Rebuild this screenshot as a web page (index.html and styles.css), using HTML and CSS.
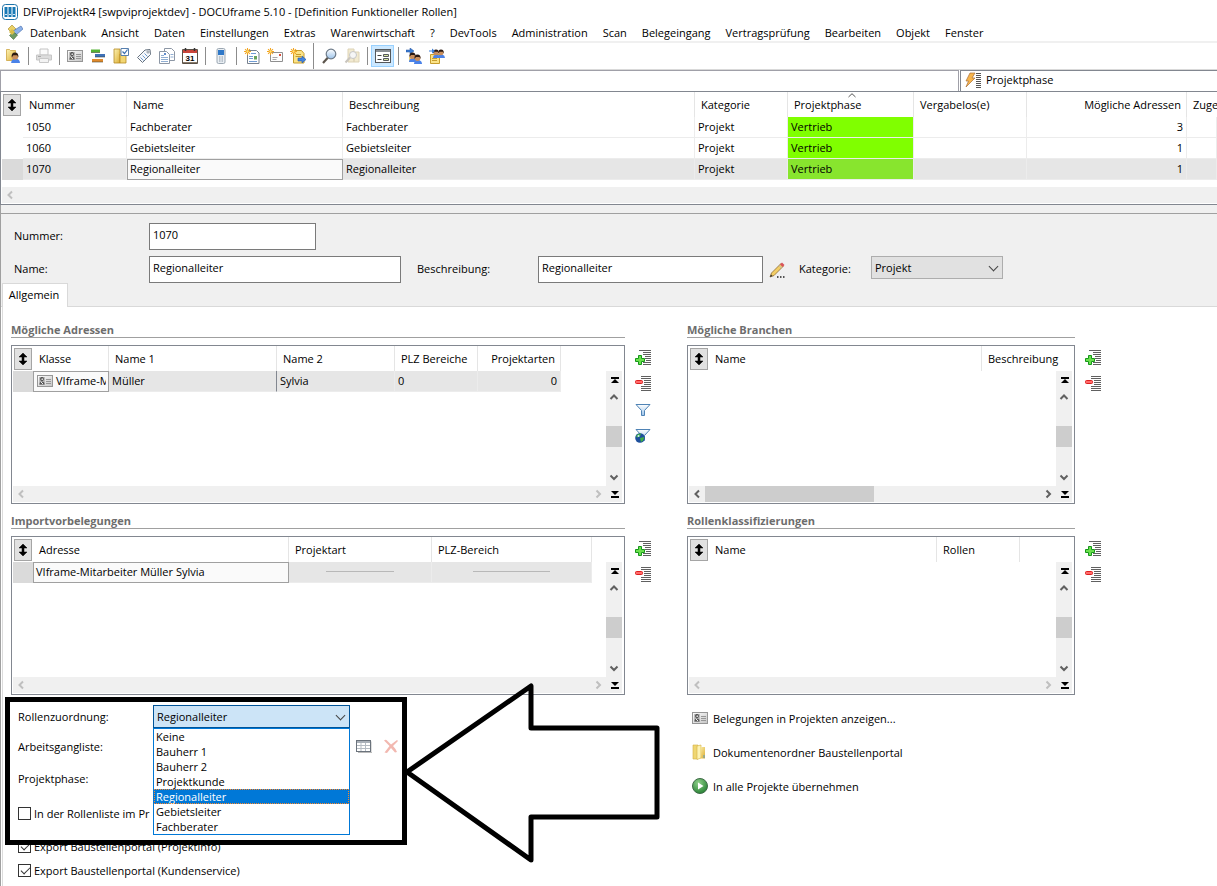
FILE: index.html
```html
<!DOCTYPE html>
<html lang="de">
<head>
  <meta charset="UTF-8">
  <meta name="viewport" content="width=device-width, initial-scale=1.0">
  <title>DFViProjektR4 - DOCUframe 5.10</title>
  <link rel="stylesheet" href="styles.css">
</head>
<body>

<!-- icon sprite -->
<svg class="sprite" width="0" height="0" aria-hidden="true">
  <defs>
    <linearGradient id="gold" x1="0" y1="0" x2="1" y2="1"><stop offset="0" stop-color="#fdf3b4"/><stop offset="1" stop-color="#dcae35"/></linearGradient>
    <linearGradient id="glass" x1="0" y1="0" x2="0" y2="1"><stop offset="0" stop-color="#fff"/><stop offset="1" stop-color="#9cc3ea"/></linearGradient>
    <radialGradient id="green" cx=".4" cy=".3" r=".8"><stop offset="0" stop-color="#8fd08a"/><stop offset="1" stop-color="#1c7a2a"/></radialGradient>
    <linearGradient id="steel" x1="0" y1="0" x2="1" y2="1"><stop offset="0" stop-color="#fff"/><stop offset="1" stop-color="#c4c4c4"/></linearGradient>
  </defs>
  <symbol id="app" viewBox="0 0 16 16"><rect x=".5" y=".5" width="15" height="15" rx="3" fill="#fff" stroke="#1d73a8"/><path d="M2.500 3h3v10h-3zM6.500 3h3v10h-3zM10.500 3h3v10h-3z" fill="#1879b5"/><path d="M3 10.500h2M7 10.500h2M11 10.500h2" stroke="#cfe6f5"/></symbol>
  <symbol id="cubes" viewBox="0 0 16 16"><path d="M5 1l4 4-4 4-4-4z" fill="#ead166" stroke="#a58725" stroke-width=".6"/><path d="M14 2l2 3-7 6-3-4z" fill="#8cb2ea" stroke="#4268a8" stroke-width=".6"/><path d="M6.500 8l4 3-4 4.500-4-4z" fill="#6f9a62" stroke="#3f6a3a" stroke-width=".6"/><path d="M5 5l3 3-3 3-3-3z" fill="#d9bd48"/></symbol>
  <symbol id="head" viewBox="0 0 9 10"><path d="M1 10q0-3 3-4h2q3 1 3 4z" fill="#4a82e8"/><circle cx="4.500" cy="4" r="2.900" fill="#c98e5c"/><path d="M1.500 5q-.5-4.500 3-4.500t3 4.500l-1-2H3z" fill="#2b1a12"/></symbol>
  <symbol id="user" viewBox="0 0 16 16"><path d="M1.500 1.500h3l1 1h5v10h-9z" fill="url(#gold)" stroke="#c79b2f" stroke-width=".7"/><use href="#head" x="5" y="4" width="10" height="11"/></symbol>
  <symbol id="printer" viewBox="0 0 16 16"><path d="M4 1h8v6H4z" fill="#fafafa" stroke="#c4c4c4"/><path d="M.5 7h15v5H.5z" fill="#dcdcdc" stroke="#c6c6c6"/><path d="M3.500 10.500h9v4h-9z" fill="#f3f3f3" stroke="#c8c8c8"/><path d="M2 8.500h3" stroke="#aaa"/></symbol>
  <symbol id="card" viewBox="0 0 16 16"><rect x=".5" y="2.500" width="15" height="11" fill="url(#steel)" stroke="#969696"/><path d="M2 4h6v8H2z" fill="#bdbdbd"/><circle cx="5" cy="6" r="1.900" fill="#444"/><circle cx="5.200" cy="6.200" r=".9" fill="#ddd"/><path d="M2.500 11.500q0-3 2.500-3t2.500 3z" fill="#555"/><path d="M4 9l2 2" stroke="#eee"/><path d="M9 6.500h5M9 8.500h5M9 10.500h5" stroke="#969696"/></symbol>
  <symbol id="gantt" viewBox="0 0 16 16"><path d="M1 1.500h9v3H1z" fill="#54b234"/><path d="M5 6h10v3H5z" fill="#3e71b8"/><path d="M2 11h11v3H2z" fill="#e08a2c"/><path d="M1 4.500h9M5 9h10M2 14h11" stroke="#3a4030" stroke-opacity=".55"/></symbol>
  <symbol id="folderdoc" viewBox="0 0 16 16"><path d="M1 1h6v14H1z" fill="url(#gold)" stroke="#b58a23" stroke-width=".8"/><path d="M7 6h6v9H7z" fill="#f2d673" stroke="#b58a23" stroke-width=".8"/><path d="M8 .5h7.500v7H8z" fill="#fff" stroke="#577fae"/><path d="M9.500 3.500l2 2 3-4" fill="none" stroke="#3b6fb0" stroke-width="1.200"/></symbol>
  <symbol id="tag" viewBox="0 0 16 16"><path d="M9 2l5-.5.5 5-8 8L1.500 9.500z" fill="#f6f8fb" stroke="#687481"/><circle cx="12" cy="4" r="1.100" fill="#fff" stroke="#687481" stroke-width=".7"/><path d="M8.500 5.500l3 3M6.500 7.500l3 3M4.500 9.500l3 3" stroke="#6c9bd0"/></symbol>
  <symbol id="docs" viewBox="0 0 16 16"><path d="M5.500.5h7l3 3v9h-10z" fill="#fff" stroke="#8d97a5"/><path d="M.5 3.500h7l3 3v9H.5z" fill="#fff" stroke="#8d97a5"/><path d="M2 7.500h3M2 9.500h7M2 11.500h7M2 13.500h7M11.500 6.500h3M11.500 9h3" stroke="#90aed2"/><path d="M5 6h2" stroke="#2d66bb" stroke-width="1.500"/></symbol>
  <symbol id="phone" viewBox="0 0 16 16"><rect x="4" y=".5" width="8" height="15" rx="1.500" fill="#e9eef3" stroke="#9ba7b2"/><path d="M5 2h6v5H5z" fill="#2f78c8"/><path d="M6 9h4M6 11h4M6 13h4" stroke="#8e9ba7" stroke-dasharray="1 .5"/></symbol>
  <symbol id="star" viewBox="0 0 8 8"><path d="M4 0v8M0 4h8M1.200 1.200l5.600 5.600M6.800 1.200L1.200 6.800" stroke="#f2a623" stroke-width="1.200"/><circle cx="4" cy="4" r="1.300" fill="#ffe178"/></symbol>
  <symbol id="newdoc" viewBox="0 0 16 16"><path d="M3.500 2.500h9l2.500 2.500v10.500H3.500z" fill="#fff" stroke="#77818e"/><path d="M7 5.500h5M5 8.500h4M5 10.500h4M5 13.500h8" stroke="#6f9bd2"/><path d="M10 8h3v3.500h-3z" fill="#69a35b"/><use href="#star" width="7" height="7"/></symbol>
  <symbol id="newmail" viewBox="0 0 16 16"><path d="M3.500 4.500h12v9h-12z" fill="#fdfdfd" stroke="#8f8f8f"/><path d="M12 6h2v2h-2z" fill="#d84d3a"/><path d="M5.500 9.500h5M5.500 11.500h4" stroke="#a9a9a9"/><use href="#star" width="7" height="7"/></symbol>
  <symbol id="newnote" viewBox="0 0 16 16"><path d="M3.500 2.500h8l2.500 3v9.500H3.500z" fill="#fbe387" stroke="#c79d2c"/><path d="M6 6.500h5M5.500 8.500h6" stroke="#c79d2c"/><path d="M8 10h4V8l4 3.500-4 3.500v-2H8z" fill="#4285e0" stroke="#2356a6" stroke-width=".6"/><use href="#star" width="7" height="7"/></symbol>
  <symbol id="search" viewBox="0 0 16 16"><path d="M7 9.500L2 15" stroke="#5c554c" stroke-width="2.200"/><circle cx="10" cy="6" r="4.800" fill="url(#glass)" stroke="#6d7a88" stroke-width="1.200"/></symbol>
  <symbol id="searchoff" viewBox="0 0 16 16"><path d="M4 1h6v13H4zM10 4h5v10h-5z" fill="#f2ead0" stroke="#ddd3b6"/><path d="M6 9.500L1.500 14.500" stroke="#c9c5be" stroke-width="2"/><circle cx="9" cy="7" r="3.500" fill="#f6f6f6" stroke="#c6c6c6"/></symbol>
  <symbol id="form" viewBox="0 0 16 16"><rect x=".5" y="1.500" width="15" height="13" fill="#fff" stroke="#54585c"/><path d="M1 2h14v2H1z" fill="#8b9095"/><path d="M2.500 7.500h4M2.500 11.500h4" stroke="#444"/><path d="M8.500 6.500h5v2h-5zM8.500 10.500h5v2h-5z" fill="#d8e6a0" stroke="#54585c"/></symbol>
  <symbol id="tousers" viewBox="0 0 16 16"><path d="M0 2h4V0l4 3-4 3V4H0z" fill="#3d7fd6" stroke="#1f4f9a" stroke-width=".5"/><path d="M3 9h6v5H3z" fill="#f2d673"/><use href="#head" x="2" y="4" width="9" height="10"/><use href="#head" x="7" y="6" width="9" height="10"/></symbol>
  <symbol id="notusers" viewBox="0 0 16 16"><path d="M1.500 6.500h9v9h-9z" fill="#fbe387" stroke="#c79d2c"/><path d="M3 10.500h5M3 12.500h5" stroke="#c79d2c"/><use href="#head" x="3" y="1" width="8" height="9"/><use href="#head" x="8" y="1" width="8" height="9"/><path d="M0 2.500h3V.5L6 3 3 5.500v-2H0z" fill="#3d7fd6"/></symbol>
  <symbol id="bolt" viewBox="0 0 17 16"><path d="M5 1h5L7 6h3L1 15l2.500-6H1z" fill="#f7b54c" stroke="#a9703a" stroke-width=".7"/><path d="M11 1.500h5M11 3.500h5M11 5.500h5M11 7.500h5M11 9.500h5M11 11.500h5M11 13.500h5M11 15.500h5" stroke="#555"/></symbol>
  <symbol id="updown" viewBox="0 0 10 14"><path d="M5 1l4 4H6v4h3l-4 4-4-4h3V5H1z" fill="#000" stroke="#000" stroke-width=".5"/></symbol>
  <symbol id="pencil" viewBox="0 0 16 16"><path d="M1 15l1.500-4L12 1.500l2.500 2.500L5 13.500z" fill="#f3ce65" stroke="#8e6b30" stroke-width=".8"/><path d="M11 2.500L13 .5l2.500 2.500-2 2z" fill="#d9545c"/><path d="M10 3.500l2.500 2.500" stroke="#b8bcc2"/><path d="M1 15l1-2.500 1.500 1.500z" fill="#333"/><path d="M8 15h2M11 15h2M14 15h2" stroke="#222" stroke-width="1.500" stroke-dasharray="1.500 1.500"/></symbol>
  <symbol id="add" viewBox="0 0 16 16"><path d="M4 .5h12M8 2.500h8M8 4.500h8M10 6.500h6M10 8.500h6M11 10.500h5M8 12.500h8M8 14.500h8" stroke="#606060"/><path d="M3.500 5.500h3v3h3v3h-3v3h-3v-3h-3v-3h3z" fill="#6ae04c" stroke="#16971a"/></symbol>
  <symbol id="remove" viewBox="0 0 16 16"><path d="M6 .5h10M6 2.500h10M9 4.500h7M9 6.500h7M9 8.500h7M6 10.500h10M6 12.500h10M6 14.500h10" stroke="#606060"/><rect x=".5" y="4.500" width="7" height="3" rx="1" fill="#ff6a6a" stroke="#dd2020"/></symbol>
  <symbol id="funnel" viewBox="0 0 16 16"><path d="M1 2.500h14L9.500 8.500v5h-3v-5z" fill="url(#glass)" stroke="#4f83b5"/></symbol>
  <symbol id="funnelglobe" viewBox="0 0 16 16"><path d="M1 1.500h14L9.500 7.500v5h-3v-5z" fill="url(#glass)" stroke="#4f83b5"/><circle cx="5" cy="10" r="4.800" fill="#1d4f9c"/><path d="M1 8q2-3 5-2.500l-1 3-3 1zM5 10l4-1q0 4-3 5z" fill="#3fae46"/><circle cx="3.500" cy="8" r="1" fill="#cfe8ff"/></symbol>
  <symbol id="up" viewBox="0 0 16 16"><path d="M4.500 10L8 6.500l3.500 3.500" fill="none" stroke="currentColor" stroke-width="2"/></symbol>
  <symbol id="down" viewBox="0 0 16 16"><path d="M4.500 6.500L8 10l3.500-3.500" fill="none" stroke="currentColor" stroke-width="2"/></symbol>
  <symbol id="left" viewBox="0 0 16 16"><path d="M10 4.500L6.500 8l3.500 3.500" fill="none" stroke="currentColor" stroke-width="2"/></symbol>
  <symbol id="right" viewBox="0 0 16 16"><path d="M6.500 4.500L10 8l-3.500 3.500" fill="none" stroke="currentColor" stroke-width="2"/></symbol>
  <symbol id="first" viewBox="0 0 16 16"><path d="M5 5h8v2H5zM9 7l4 4H5z" fill="#000"/></symbol>
  <symbol id="last" viewBox="0 0 16 16"><path d="M5 10h8v2H5zM9 9l4-4H5z" fill="#000"/></symbol>
  <symbol id="grid" viewBox="0 0 16 16"><path d="M2 14.500h14v-11" fill="none" stroke="#bbb"/><rect x=".5" y="2.500" width="14" height="11" fill="#fff" stroke="#6b737c"/><path d="M1 3h13v2H1z" fill="#a9b0b8"/><path d="M1 7.500h13M1 10.500h13M5 5v8M9.500 5v8" stroke="#b5bcc3"/></symbol>
  <symbol id="cross" viewBox="0 0 16 16"><path d="M1 2.500q2-1.500 3 0l4 4 6-4.500 1 1-5 5q3 3 4 6l-2 .5-4-4.500-4 5-2.500-.5 5-6.500z" fill="#f2b8b0"/></symbol>
  <symbol id="folder" viewBox="0 0 16 16"><path d="M1 1h5v14H1z" fill="#efd672" stroke="#d3b040" stroke-width=".6"/><path d="M5 2l4-1v13l-4 1.500z" fill="#fdf3b4" stroke="#d3b040" stroke-width=".6"/><path d="M9 3h4v11.500H7L9 14z" fill="url(#gold)"/><path d="M12 11v3" stroke="#5a9bc0"/></symbol>
  <symbol id="play" viewBox="0 0 16 16"><circle cx="8" cy="8" r="7.500" fill="url(#green)" stroke="#3f6b48"/><path d="M6 4.500L11.500 8 6 11.500z" fill="#fff"/></symbol>
</svg>

<header class="titlebar">
  <svg class="icon"><use href="#app"/></svg>
  <span>DFViProjektR4 [swpviprojektdev] - DOCUframe 5.10 - [Definition Funktioneller Rollen]</span>
</header>

<nav class="menubar">
  <svg class="icon"><use href="#cubes"/></svg>
  <a href="#">Datenbank</a>
  <a href="#">Ansicht</a>
  <a href="#">Daten</a>
  <a href="#">Einstellungen</a>
  <a href="#">Extras</a>
  <a href="#">Warenwirtschaft</a>
  <a href="#">?</a>
  <a href="#">DevTools</a>
  <a href="#">Administration</a>
  <a href="#">Scan</a>
  <a href="#">Belegeingang</a>
  <a href="#">Vertragsprüfung</a>
  <a href="#">Bearbeiten</a>
  <a href="#">Objekt</a>
  <a href="#">Fenster</a>
</nav>

<div class="toolbar">
  <button aria-label="Benutzer"><svg class="icon"><use href="#user"/></svg></button>
  <i class="sep"></i>
  <button aria-label="Drucken"><svg class="icon"><use href="#printer"/></svg></button>
  <i class="sep"></i>
  <button aria-label="Adresse"><svg class="icon"><use href="#card"/></svg></button>
  <button aria-label="Projekte"><svg class="icon"><use href="#gantt"/></svg></button>
  <button aria-label="Ordner"><svg class="icon"><use href="#folderdoc"/></svg></button>
  <button aria-label="Artikel"><svg class="icon"><use href="#tag"/></svg></button>
  <button aria-label="Dokumente"><svg class="icon"><use href="#docs"/></svg></button>
  <button aria-label="Kalender">
    <svg class="icon" viewBox="0 0 16 16"><path d="M.5 1.500h15v14H.5z" fill="#fff" stroke="#5a5147"/><path d="M1 2h14v3H1z" fill="#c9453a"/><path d="M1 14.500h14" stroke="#8a7c6c"/><path d="M3.500 0v3M12.500 0v3" stroke="#333" stroke-width="1.500"/><text x="8" y="13" text-anchor="middle" class="cal-day">31</text></svg>
  </button>
  <i class="sep"></i>
  <button aria-label="Telefon"><svg class="icon"><use href="#phone"/></svg></button>
  <i class="sep"></i>
  <button aria-label="Neues Dokument"><svg class="icon"><use href="#newdoc"/></svg></button>
  <button aria-label="Neue Mail"><svg class="icon"><use href="#newmail"/></svg></button>
  <button aria-label="Neue Notiz"><svg class="icon"><use href="#newnote"/></svg></button>
  <i class="sep full"></i>
  <button aria-label="Suchen"><svg class="icon"><use href="#search"/></svg></button>
  <button aria-label="Ordner suchen"><svg class="icon"><use href="#searchoff"/></svg></button>
  <i class="sep"></i>
  <button aria-label="Formular" class="active"><svg class="icon"><use href="#form"/></svg></button>
  <i class="sep"></i>
  <button aria-label="Zuweisen"><svg class="icon"><use href="#tousers"/></svg></button>
  <button aria-label="Notiz zuweisen"><svg class="icon"><use href="#notusers"/></svg></button>
</div>

<div class="filterbar">
  <input type="text" aria-label="Filter">
  <button><svg class="bolt"><use href="#bolt"/></svg>Projektphase</button>
</div>

<div class="mainlist">
  <table class="data wide">
    <colgroup><col class="c-mark"><col class="c-nr"><col class="c-name"><col class="c-desc"><col class="c-kat"><col class="c-phase"><col class="c-los"><col class="c-adr"><col></colgroup>
    <thead>
      <tr>
        <th><button class="sort" aria-label="Sortieren"><svg><use href="#updown"/></svg></button></th>
        <th>Nummer</th><th>Name</th><th>Beschreibung</th><th>Kategorie</th>
        <th class="sorted">Projektphase<svg class="caret" viewBox="0 0 8 5"><path d="M.5 4L4 .7 7.500 4" fill="none" stroke="#555"/></svg></th>
        <th>Vergabelos(e)</th><th class="num">Mögliche Adressen</th><th class="last">Zuge</th>
      </tr>
    </thead>
    <tbody>
      <tr><td></td><td>1050</td><td>Fachberater</td><td>Fachberater</td><td>Projekt</td><td class="phase">Vertrieb</td><td></td><td class="num">3</td><td></td></tr>
      <tr><td></td><td>1060</td><td>Gebietsleiter</td><td>Gebietsleiter</td><td>Projekt</td><td class="phase">Vertrieb</td><td></td><td class="num">1</td><td></td></tr>
      <tr class="selected"><td></td><td>1070</td><td class="focus">Regionalleiter</td><td>Regionalleiter</td><td>Projekt</td><td class="phase">Vertrieb</td><td></td><td class="num">1</td><td></td></tr>
    </tbody>
  </table>
  <div class="hscroll off"><button aria-label="Links"><svg class="icon"><use href="#left"/></svg></button></div>
</div>

<main class="record">
  <form class="fields">
    <div class="row">
      <label for="nummer" class="l-first">Nummer:</label>
      <input type="text" id="nummer" class="w-nr" value="1070">
    </div>
    <div class="row">
      <label for="name" class="l-first">Name:</label>
      <input type="text" id="name" class="w-name" value="Regionalleiter">
      <label for="beschreibung" class="l-desc">Beschreibung:</label>
      <input type="text" id="beschreibung" class="w-desc" value="Regionalleiter">
      <button type="button" class="plain edit" aria-label="Bearbeiten"><svg class="icon"><use href="#pencil"/></svg></button>
      <label for="kategorie" class="l-kat">Kategorie:</label>
      <span class="select w-kat"><select id="kategorie"><option>Projekt</option></select></span>
    </div>
    <div class="tabs"><button type="button" class="tab">Allgemein</button></div>
  </form>

  <div class="pane">
    <section>
      <h2>Mögliche Adressen</h2>
      <div class="list">
        <table class="data">
          <colgroup><col class="c-mark2"><col class="c-klasse"><col class="c-name1"><col class="c-name2"><col class="c-plz"><col class="c-plz"></colgroup>
          <thead><tr><th><button class="sort" aria-label="Sortieren"><svg><use href="#updown"/></svg></button></th><th>Klasse</th><th>Name 1</th><th>Name 2</th><th>PLZ Bereiche</th><th class="num">Projektarten</th></tr></thead>
          <tbody><tr class="selected"><td></td><td class="focus"><div class="klasse"><svg class="icon"><use href="#card"/></svg><span>VIframe-M</span></div></td><td class="dark">Müller</td><td>Sylvia</td><td>0</td><td class="num">0</td></tr></tbody>
        </table>
        <div class="vscroll">
          <button aria-label="Anfang"><svg class="icon"><use href="#first"/></svg></button>
          <button aria-label="Hoch"><svg class="icon"><use href="#up"/></svg></button>
          <span class="thumb"></span>
          <button aria-label="Runter"><svg class="icon"><use href="#down"/></svg></button>
        </div>
        <div class="hscroll off">
          <button aria-label="Links"><svg class="icon"><use href="#left"/></svg></button>
          <button aria-label="Rechts" class="end"><svg class="icon"><use href="#right"/></svg></button>
          <button aria-label="Ende"><svg class="icon"><use href="#last"/></svg></button>
        </div>
      </div>
    </section>
    <div class="tools">
      <button class="plain" aria-label="Adresse hinzufügen"><svg class="icon"><use href="#add"/></svg></button>
      <button class="plain" aria-label="Adresse entfernen"><svg class="icon"><use href="#remove"/></svg></button>
      <button class="plain" aria-label="Filter"><svg class="icon"><use href="#funnel"/></svg></button>
      <button class="plain" aria-label="Globaler Filter"><svg class="icon"><use href="#funnelglobe"/></svg></button>
    </div>

    <section>
      <h2>Mögliche Branchen</h2>
      <div class="list">
        <table class="data wide">
          <colgroup><col class="c-mark2"><col class="c-branche"><col></colgroup>
          <thead><tr><th><button class="sort" aria-label="Sortieren"><svg><use href="#updown"/></svg></button></th><th>Name</th><th class="last">Beschreibung</th></tr></thead>
        </table>
        <div class="vscroll">
          <button aria-label="Anfang"><svg class="icon"><use href="#first"/></svg></button>
          <button aria-label="Hoch"><svg class="icon"><use href="#up"/></svg></button>
          <span class="thumb"></span>
          <button aria-label="Runter"><svg class="icon"><use href="#down"/></svg></button>
        </div>
        <div class="hscroll">
          <button aria-label="Links"><svg class="icon"><use href="#left"/></svg></button>
          <span class="thumb"></span>
          <button aria-label="Rechts" class="end"><svg class="icon"><use href="#right"/></svg></button>
          <button aria-label="Ende"><svg class="icon"><use href="#last"/></svg></button>
        </div>
      </div>
    </section>
    <div class="tools">
      <button class="plain" aria-label="Branche hinzufügen"><svg class="icon"><use href="#add"/></svg></button>
      <button class="plain" aria-label="Branche entfernen"><svg class="icon"><use href="#remove"/></svg></button>
    </div>

    <section>
      <h2>Importvorbelegungen</h2>
      <div class="list">
        <table class="data">
          <colgroup><col class="c-mark2"><col class="c-adresse"><col class="c-art"><col class="c-bereich"></colgroup>
          <thead><tr><th><button class="sort" aria-label="Sortieren"><svg><use href="#updown"/></svg></button></th><th>Adresse</th><th>Projektart</th><th>PLZ-Bereich</th></tr></thead>
          <tbody><tr class="selected"><td></td><td class="focus">VIframe-Mitarbeiter Müller Sylvia</td><td><hr></td><td><hr></td></tr></tbody>
        </table>
        <div class="vscroll">
          <button aria-label="Anfang"><svg class="icon"><use href="#first"/></svg></button>
          <button aria-label="Hoch"><svg class="icon"><use href="#up"/></svg></button>
          <span class="thumb"></span>
          <button aria-label="Runter"><svg class="icon"><use href="#down"/></svg></button>
        </div>
        <div class="hscroll off">
          <button aria-label="Links"><svg class="icon"><use href="#left"/></svg></button>
          <button aria-label="Rechts" class="end"><svg class="icon"><use href="#right"/></svg></button>
          <button aria-label="Ende"><svg class="icon"><use href="#last"/></svg></button>
        </div>
      </div>
    </section>
    <div class="tools">
      <button class="plain" aria-label="Vorbelegung hinzufügen"><svg class="icon"><use href="#add"/></svg></button>
      <button class="plain" aria-label="Vorbelegung entfernen"><svg class="icon"><use href="#remove"/></svg></button>
    </div>

    <section>
      <h2>Rollenklassifizierungen</h2>
      <div class="list">
        <table class="data">
          <colgroup><col class="c-mark2"><col class="c-klass"><col class="c-plz"></colgroup>
          <thead><tr><th><button class="sort" aria-label="Sortieren"><svg><use href="#updown"/></svg></button></th><th>Name</th><th>Rollen</th></tr></thead>
        </table>
        <div class="vscroll">
          <button aria-label="Anfang"><svg class="icon"><use href="#first"/></svg></button>
          <button aria-label="Hoch"><svg class="icon"><use href="#up"/></svg></button>
          <span class="thumb"></span>
          <button aria-label="Runter"><svg class="icon"><use href="#down"/></svg></button>
        </div>
        <div class="hscroll off">
          <button aria-label="Links"><svg class="icon"><use href="#left"/></svg></button>
          <button aria-label="Rechts" class="end"><svg class="icon"><use href="#right"/></svg></button>
          <button aria-label="Ende"><svg class="icon"><use href="#last"/></svg></button>
        </div>
      </div>
    </section>
    <div class="tools">
      <button class="plain" aria-label="Klassifizierung hinzufügen"><svg class="icon"><use href="#add"/></svg></button>
      <button class="plain" aria-label="Klassifizierung entfernen"><svg class="icon"><use href="#remove"/></svg></button>
    </div>

    <form class="options">
      <div class="option">
        <label for="rolle">Rollenzuordnung:</label>
        <div class="dropdown">
          <span class="select open"><select id="rolle"><option>Regionalleiter</option></select></span>
          <ul>
            <li>Keine</li>
            <li>Bauherr 1</li>
            <li>Bauherr 2</li>
            <li>Projektkunde</li>
            <li class="current">Regionalleiter</li>
            <li>Gebietsleiter</li>
            <li>Fachberater</li>
          </ul>
        </div>
      </div>
      <div class="option">
        <span class="caption">Arbeitsgangliste:</span>
        <button type="button" class="plain" aria-label="Auswählen"><svg class="icon"><use href="#grid"/></svg></button>
        <button type="button" class="plain" aria-label="Löschen"><svg class="icon"><use href="#cross"/></svg></button>
      </div>
      <div class="option tall"><span>Projektphase:</span></div>
      <div class="option tall"><input type="checkbox" id="liste"><label for="liste">In der Rollenliste im Pr</label></div>
      <div class="option"><input type="checkbox" id="info" checked><label for="info">Export Baustellenportal (Projektinfo)</label></div>
      <div class="option short"><input type="checkbox" id="service" checked><label for="service">Export Baustellenportal (Kundenservice)</label></div>

      <!-- marker drawn over the form -->
      <svg class="marker" viewBox="0 0 656 184" fill="none" stroke="#000" stroke-width="5">
        <rect x="2.500" y="18.500" width="397" height="143"/>
        <path d="M402 91L526 5v42h126v89H526v43z" stroke-linejoin="round"/>
      </svg>
    </form>

    <div class="links">
      <a href="#"><svg class="icon"><use href="#card"/></svg>Belegungen in Projekten anzeigen...</a>
      <a href="#"><svg class="icon"><use href="#folder"/></svg>Dokumentenordner Baustellenportal</a>
      <a href="#"><svg class="icon"><use href="#play"/></svg>In alle Projekte übernehmen</a>
    </div>
  </div>
</main>

</body>
</html>
```
FILE: styles.css
```css
*{
  box-sizing:border-box;
}
body{
  margin:0;
  min-height:100vh;
  display:flex;
  flex-direction:column;
  overflow-x:hidden;
  background:#fff;
  color:#000;
  font:11px/15px "Open Sans","Noto Sans",sans-serif;
}
button,input,select{
  font:inherit;
  color:inherit;
  margin:0;
}
button{
  padding:0;
  border:0;
  background:none;
}
a{
  color:inherit;
  text-decoration:none;
}
.sprite{
  position:absolute;
}
.icon{
  width:16px;
  height:16px;
  flex:none;
  display:block;
}
.cal-day{
  font:bold 8px "Liberation Sans",sans-serif;
}

/* title, menu, toolbar */
.titlebar{
  height:23px;
  padding-left:2px;
  display:flex;
  align-items:center;
  gap:5px;
}
.menubar{
  height:20px;
  padding-left:7px;
  display:flex;
  align-items:center;
  gap:15px;
  border-bottom:2px solid #f0f0f0;
}
.menubar .icon{
  margin-right:-8px;
}
.toolbar{
  height:26px;
  padding-left:1px;
  display:flex;
  align-items:center;
}
.toolbar button{
  width:23px;
  height:22px;
  display:flex;
  align-items:center;
  justify-content:center;
}
.toolbar .active{
  background:#cce8ff;
  border:1px solid #99d1ff;
}
.sep{
  width:8px;
  height:18px;
  background:linear-gradient(#8c8c8c,#8c8c8c) center/1px 100% no-repeat;
}
.sep.full{
  height:26px;
}
.filterbar{
  height:22px;
  display:grid;
  grid-template-columns:minmax(0,959fr) minmax(0,257fr);
  column-gap:1px;
  border-top:1px solid #d9d9d9;
}
.filterbar input{
  border:1px solid #a0a0a8;
  border-bottom-width:0;
}
.filterbar button{
  padding:0 0 3px 4px;
  display:flex;
  align-items:center;
  gap:4px;
  border:1px solid #828790;
  border-right:0;
  border-bottom:0;
}
.bolt{
  width:17px;
  height:16px;
}

/* tables */
.data{
  width:1px;
  table-layout:fixed;
  border-spacing:0;
}
.data.wide{
  width:100%;
}
.data th{
  height:25px;
  padding:0 6px;
  text-align:left;
  font-weight:normal;
  white-space:nowrap;
  border-right:1px solid #e5e5e5;
}
.data th:first-child{
  padding:0 1px;
  border-right:0;
}
.data th.last{
  border-right:0;
}
.data td{
  height:21px;
  padding:0 3px 2px;
  white-space:nowrap;
  overflow:hidden;
  border-right:1px solid #ececec;
  border-bottom:1px solid #ececec;
}
.data td:first-child{
  border-color:transparent;
}
.data .num{
  text-align:right;
}
.data th.num{
  padding-right:5px;
}
.selected td{
  background:#e6e6e6;
}
.selected td:first-child{
  background:#dadada;
}
.selected td.focus{
  background:#fafafa;
  border:1px solid #a0a0a0;
  padding:0 2px 2px;
}
.selected td.dark{
  border-right-color:#828790;
}
td.phase{
  background:#80ff00;
}
.selected td.phase{
  background:#88e52e;
}
.data th.sorted{
  position:relative;
}
.caret{
  position:absolute;
  top:1px;
  left:60px;
  width:8px;
  height:5px;
}
.data hr{
  width:50%;
  margin:0 auto;
  border:0;
  border-top:1px solid #b8b8b8;
}
.sort{
  width:18px;
  height:22px;
  display:flex;
  align-items:center;
  justify-content:center;
  background:#e1e1e1;
  border:1px solid #a5a5a5;
}
.sort svg{
  width:10px;
  height:14px;
}
.klasse{
  display:flex;
  align-items:center;
  gap:3px;
  padding-left:1px;
  overflow:hidden;
}
.c-mark{width:21px}
.c-nr{width:104px}
.c-name{width:216px}
.c-desc{width:352px}
.c-kat{width:93px}
.c-phase{width:126px}
.c-los{width:113px}
.c-adr{width:160px}
.c-mark2{width:20px}
.c-klasse{width:76px}
.c-name1{width:168px}
.c-name2{width:118px}
.c-plz{width:83px}
.c-adresse{width:256px}
.c-art{width:143px}
.c-bereich{width:160px}
.c-branche{width:273px}
.c-klass{width:228px}

.mainlist{
  border:1px solid #828790;
  border-right:0;
  padding:0 0 1px 1px;
  overflow:hidden;
}
.mainlist .hscroll{
  margin-top:7px;
}
.hscroll,.vscroll{
  display:flex;
  background:#f0f0f0;
  color:#606060;
}
.hscroll{
  height:16px;
}
.hscroll.off{
  color:#bfbfbf;
}
.hscroll .end{
  margin-left:auto;
}
.thumb{
  background:#cdcdcd;
}

/* record */
.record{
  flex:1;
  display:flex;
  flex-direction:column;
  border-left:1px solid #a0a0a0;
}
.fields{
  padding-top:9px;
  display:flex;
  flex-direction:column;
  gap:6px;
  background:#f0f0f0;
  border-top:1px solid #a0a0a0;
  box-shadow:0 -8px 0 #f0f0f0;
  margin-top:8px;
}
.row{
  height:27px;
  padding-left:13px;
  display:flex;
  align-items:flex-start;
}
.row label{
  line-height:25px;
}
.row input{
  height:27px;
  padding:0 3px 4px;
  background:#fff;
  border:1px solid #7a7a7a;
}
.l-first{width:135px}
.l-desc{width:121px}
.l-kat{width:72px}
.w-nr{width:167px}
.w-name{width:252px;margin-right:16px}
.w-desc{width:225px}
.w-kat{width:132px}
.edit{
  margin:6px 14px 0 6px;
}
.select{
  display:block;
  height:23px;
  position:relative;
}
.select::after{
  content:"";
  position:absolute;
  right:6px;
  top:7px;
  width:6px;
  height:6px;
  border:solid #444;
  border-width:0 1px 1px 0;
  transform:rotate(45deg);
}
.select select{
  width:100%;
  height:100%;
  padding:0 3px;
  appearance:none;
  background:#e1e1e1;
  border:1px solid #adadad;
  border-radius:0;
}
.select.open select{
  background:#cce4f7;
  border-color:#005499;
}
.tabs{
  height:24px;
  margin-top:-6px;
  display:flex;
  border-bottom:1px solid #d9d9d9;
}
.tab{
  width:66px;
  height:24px;
  margin-left:1px;
  padding:0 2px 2px 0;
  background:#fff;
  border:1px solid #d9d9d9;
  border-bottom:0;
}

.pane{
  flex:1;
  margin-left:1px;
  padding:6px 0 0 8px;
  display:grid;
  grid-template-columns:minmax(0,614fr) 62px minmax(0,388fr) 142px;
  align-content:start;
  border-left:1px solid #dcdcdc;
}
h2{
  margin:0 0 7px;
  padding-top:9px;
  font-size:11px;
  line-height:15px;
  color:#6d6d6d;
  border-bottom:1px solid #a0a0a0;
}
.list{
  height:159px;
  padding:0 2px 1px 1px;
  display:grid;
  grid-template-columns:minmax(0,1fr) 16px;
  grid-template-rows:25px 1fr 16px;
  border:1px solid #828790;
}
.list .data{
  grid-area:1/1/3/3;
  align-self:start;
}
.vscroll{
  grid-area:2/2;
  padding-bottom:1px;
  flex-direction:column;
}
.vscroll .thumb{
  height:21px;
  margin:21px 0 auto;
}
.vscroll button{
  height:17px;
}
.list .hscroll{
  grid-area:3/1/4/3;
}
.hscroll .thumb{
  width:44%;
}
.tools{
  padding:32px 0 0 10px;
}
.plain{
  display:block;
}
.tools .plain{
  height:26px;
}

.options{
  grid-column:span 2;
  padding:6px 0 0 7px;
  position:relative;
}
.option{
  height:30px;
  display:flex;
  align-items:center;
}
.option.tall{
  height:35px;
}
.option.short{
  height:18px;
}
.option > label:first-child{
  width:135px;
}
.caption{
  width:338px;
}
.option .plain{
  margin-right:11px;
}
.option input{
  appearance:none;
  width:13px;
  height:13px;
  margin-right:3px;
  background:#fff;
  border:1px solid #333;
}
.option input:checked::after{
  content:"";
  display:block;
  width:8px;
  height:4px;
  margin:2px 0 0 2px;
  border:solid #333;
  border-width:0 0 1px 1px;
  transform:rotate(-45deg);
}
.dropdown{
  width:197px;
  position:relative;
}
.dropdown ul{
  position:absolute;
  z-index:1;
  top:23px;
  left:0;
  width:100%;
  margin:0;
  padding:0;
  list-style:none;
  background:#fff;
  border:1px solid #0078d7;
}
.dropdown li{
  padding-left:2px;
}
.dropdown .current{
  color:#fff;
  background:#0078d7;
  outline:1px dotted #ff8728;
  outline-offset:-1px;
}
.marker{
  position:absolute;
  z-index:2;
  top:-14px;
  left:-6px;
  width:656px;
  height:184px;
  pointer-events:none;
}
.links{
  grid-column:span 2;
  padding:6px 0 0 5px;
}
.links a{
  height:34px;
  display:flex;
  align-items:center;
  gap:5px;
}
```
